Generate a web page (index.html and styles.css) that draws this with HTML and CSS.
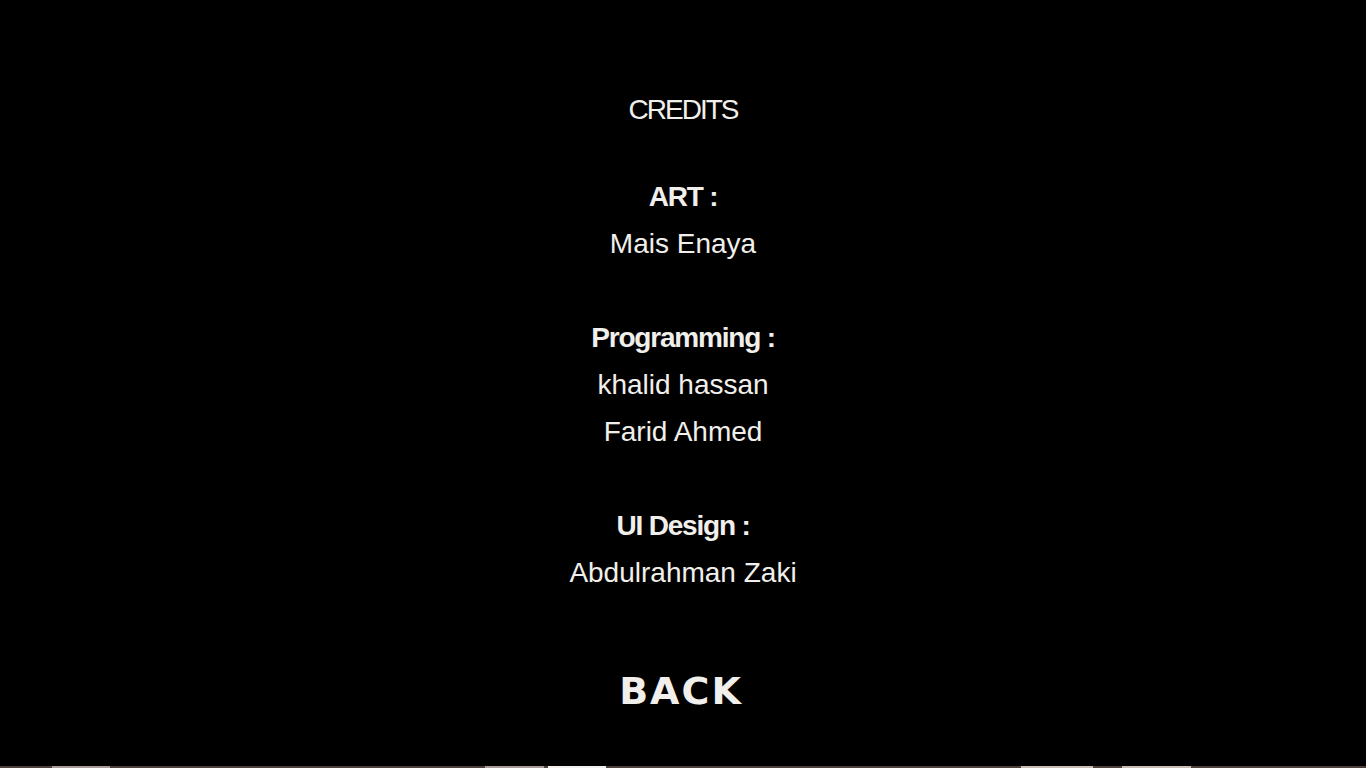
FILE: index.html
```html
<!DOCTYPE html>
<html lang="en">
<head>
<meta charset="utf-8">
<title>Credits</title>
<link rel="stylesheet" href="styles.css">
</head>
<body>
<main class="credits">
  <h1 class="title">CREDITS</h1>
  <section class="group">
    <h2 class="role">ART :</h2>
    <p class="name">Mais Enaya</p>
  </section>
  <section class="group">
    <h2 class="role">Programming :</h2>
    <p class="name">khalid hassan</p>
    <p class="name">Farid Ahmed</p>
  </section>
  <section class="group">
    <h2 class="role">UI Design :</h2>
    <p class="name">Abdulrahman Zaki</p>
  </section>
  <button class="back" type="button">BACK</button>
</main>
<div class="strip">
  <span class="seg seg-a"></span>
  <span class="seg seg-b"></span>
  <span class="seg seg-c"></span>
  <span class="seg seg-d"></span>
  <span class="seg seg-e"></span>
</div>
</body>
</html>
```

FILE: styles.css
```css
html, body {
  margin: 0;
  padding: 0;
  background: #000;
  height: 100%;
}

body {
  display: flex;
  flex-direction: column;
  height: 768px;
  overflow: hidden;
  color: #f1efeb;
  font-family: "Liberation Sans", Arial, sans-serif;
}

.credits {
  flex: 1;
  display: flex;
  flex-direction: column;
  align-items: center;
  padding-top: 86px;
}

.title {
  margin: 0 0 40px;
  font-size: 28px;
  font-weight: normal;
  line-height: 47px;
  letter-spacing: -2px;
}

.group {
  display: flex;
  flex-direction: column;
  align-items: center;
  margin-bottom: 47px;
}

.group:last-of-type {
  margin-bottom: 75px;
}

.role {
  margin: 0;
  font-size: 28px;
  font-weight: bold;
  line-height: 47px;
  letter-spacing: -1.2px;
}

.name {
  margin: 0;
  font-size: 28px;
  line-height: 47px;
  letter-spacing: 0;
}

.back {
  margin: 0 0 0 -4px;
  padding: 0;
  border: 0;
  background: none;
  color: #f1efeb;
  font-family: "DejaVu Sans", sans-serif;
  font-weight: bold;
  font-size: 38px;
  line-height: 40px;
  letter-spacing: 2px;
  cursor: pointer;
}

.strip {
  display: flex;
  height: 2px;
  background: #4b403a;
}

.seg {
  display: block;
  height: 2px;
}

.seg-a { margin-left: 52px; width: 58px; background: #a89c9c; }
.seg-b { margin-left: 375px; width: 59px; background: #a89c9c; }
.seg-c { margin-left: 4px; width: 58px; background: #f2f0ee; }
.seg-d { margin-left: 415px; width: 72px; background: #c9bdb3; }
.seg-e { margin-left: 29px; width: 69px; background: #c9bdb3; }
```
